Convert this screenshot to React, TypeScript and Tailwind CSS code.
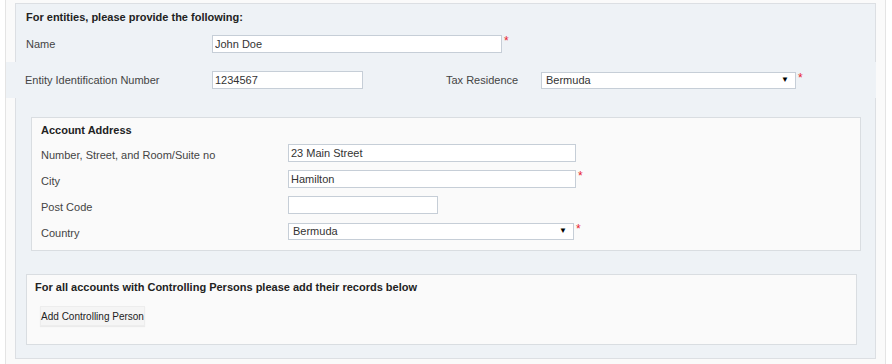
import React from 'react';

function Req() {
  return <span className="self-start ml-[2px] mt-[1px] text-[12px] leading-[10px] text-[#e8232c]">*</span>;
}

function Field({ children, req }: { children: React.ReactNode; req?: boolean }) {
  return (
    <div className="flex items-start">
      {children}
      {req && <Req />}
    </div>
  );
}

function TextBox({ value, width }: { value: string; width: string }) {
  return (
    <input
      readOnly
      defaultValue={value}
      className={`${width} h-[18px] border border-[#c6ced7] bg-white px-[2px] text-[11px] text-[#333] outline-none`}
    />
  );
}

function SelectBox({ value, width }: { value: string; width: string }) {
  return (
    <div
      className={`${width} h-[17px] flex items-center justify-between border border-[#c6ced7] bg-white pl-[4px] pr-[6px] text-[11px] text-[#333]`}
    >
      <span>{value}</span>
      <span className="text-[8px] text-black leading-none">▼</span>
    </div>
  );
}

export default function App() {
  return (
    <main className="bg-white h-[364px] font-['Liberation_Sans',Arial,sans-serif] text-[11px] text-[#444]">
      <div className="ml-[5px] w-[881px] h-[364px] border-x border-[#e4e4e4] bg-[#fafafa] pt-[3px]">
        <div className="ml-[9px] w-[861px] border border-[#dcdfe3] bg-[#eef2f6] pb-[13px]">
          <div className="h-[26px] pl-[10px] flex items-center font-bold text-[#222]">
            For entities, please provide the following:
          </div>

          <div className="h-[28px] pl-[10px] flex items-center">
            <span className="w-[186px]">Name</span>
            <Field req>
              <TextBox value="John Doe" width="w-[290px]" />
            </Field>
          </div>

          <div className="mt-[4px] h-[36px] -ml-[10px] -mr-[1px] bg-[#eef2f6] pl-[19px] flex items-center">
            <span className="w-[187px]">Entity Identification Number</span>
            <TextBox value="1234567" width="w-[151px]" />
            <span className="ml-[83px] w-[95px]">Tax Residence</span>
            <Field req>
              <SelectBox value="Bermuda" width="w-[255px]" />
            </Field>
          </div>

          <section className="mt-[19px] ml-[15px] mr-[14px] border border-[#d9dde1] bg-[#fafafa] pl-[9px] pb-[6px]">
            <div className="h-[22px] pt-[2px] flex items-center font-bold text-[#222]">Account Address</div>
            <div className="h-[26px] flex items-center">
              <span className="w-[247px] pt-[5px]">Number, Street, and Room/Suite no</span>
              <TextBox value="23 Main Street" width="w-[288px]" />
            </div>
            <div className="h-[26px] flex items-center">
              <span className="w-[247px] pt-[5px]">City</span>
              <Field req>
                <TextBox value="Hamilton" width="w-[288px]" />
              </Field>
            </div>
            <div className="h-[26px] flex items-center">
              <span className="w-[247px] pt-[5px]">Post Code</span>
              <TextBox value="" width="w-[150px]" />
            </div>
            <div className="h-[26px] flex items-center">
              <span className="w-[247px] pt-[5px]">Country</span>
              <Field req>
                <SelectBox value="Bermuda" width="w-[286px]" />
              </Field>
            </div>
          </section>

          <section className="mt-[23px] ml-[10px] mr-[18px] border border-[#d9dde1] bg-[#fafafa] pb-[18px]">
            <div className="h-[24px] pl-[8px] flex items-center font-bold text-[#222]">
              For all accounts with Controlling Persons please add their records below
            </div>
            <div className="mt-[7px] pl-[13px]">
              <button className="h-[20px] w-[105px] bg-[#f5f5f5] border border-[#ededed] shadow-[0_1px_1px_rgba(0,0,0,0.06)] text-[10px] text-[#222]">
                Add Controlling Person
              </button>
            </div>
          </section>
        </div>
      </div>
    </main>
  );
}
